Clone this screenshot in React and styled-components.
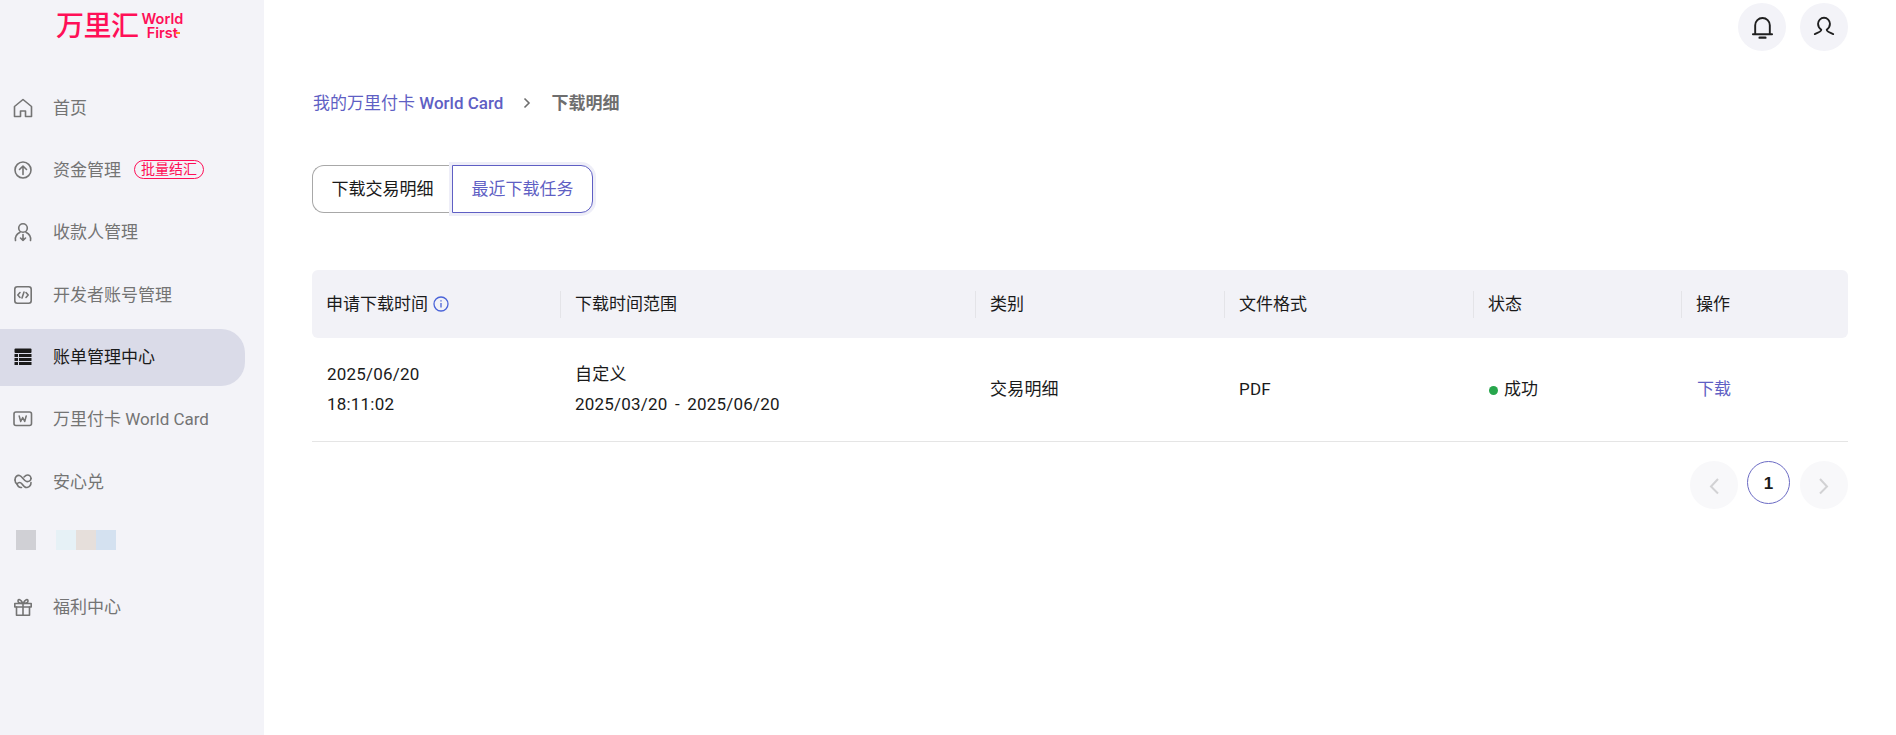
import React from "react";
import styled, { createGlobalStyle } from "styled-components";

const Global = createGlobalStyle`
  html, body { margin: 0; padding: 0; background: #fff; }
  body { font-family: Roboto, "Noto Sans CJK SC", sans-serif; font-size: 17px; color: #1a1a1a; }
  * { box-sizing: border-box; }
`;

const Page = styled.div`
  display: flex;
  width: 1896px;
  height: 735px;
  overflow: hidden;
`;
const Sidebar = styled.aside`
  width: 264px;
  flex: none;
  background: #f3f3f8;
  display: flex;
  flex-direction: column;
`;
const Logo = styled.div`
  height: 79px;
  padding: 11px 0 0 56px;
  display: flex;
  align-items: flex-start;
  gap: 3px;
  color: #ff0f57;
`;
const LogoCn = styled.div`
  font-size: 28px;
  line-height: 32px;
  font-weight: 500;
  letter-spacing: -0.5px;
`;
const LogoEn = styled.div`
  position: relative;
  font-family: Inter, sans-serif;
  font-weight: 600;
  font-size: 14.5px;
  line-height: 14px;
  padding-top: 1px;
  text-align: center;
`;
const LogoMark = styled.span`
  position: absolute;
  right: 3px;
  bottom: 6px;
  width: 4px;
  height: 2px;
  background: #ff8a1f;
`;
const Nav = styled.nav`
  display: flex;
  flex-direction: column;
  gap: 5.4px;
`;
const NavItem = styled.div`
  height: 57px;
  width: 245px;
  display: flex;
  align-items: center;
  padding-left: 13px;
  border-radius: 0 24px 24px 0;
  background: ${(p) => (p.$active ? "#dadbe8" : "transparent")};
  color: ${(p) => (p.$active ? "#1a1a1a" : "#747474")};
  font-size: 17px;
  svg { flex: none; }
`;
const NavLabel = styled.span`
  margin-left: 20px;
  line-height: 20px;
`;
const Badge = styled.span`
  margin-left: 13px;
  height: 19px;
  width: 70px;
  flex: none;
  border: 1px solid #ff0f57;
  border-radius: 10px;
  color: #ff0f57;
  font-size: 14px;
  line-height: 17px;
  text-align: center;
  white-space: nowrap;
`;
const Blur = styled.span`
  width: 20px;
  height: 20px;
  flex: none;
  background: ${(p) => p.$c};
`;
const BlurRow = styled.div`
  height: 57px;
  display: flex;
  align-items: flex-start;
  padding: 14px 0 0 16px;
`;
const BlurGap = styled.span`
  width: 20px;
`;
const Main = styled.main`
  flex: 1;
  padding: 3px 48px 0;
  display: flex;
  flex-direction: column;
`;
const TopBar = styled.div`
  display: flex;
  justify-content: flex-end;
  gap: 14px;
`;
const RoundBtn = styled.div`
  width: 48px;
  height: 48px;
  border-radius: 50%;
  background: #f3f3f8;
  display: flex;
  align-items: center;
  justify-content: center;
`;
const Crumbs = styled.div`
  margin-top: 38px;
  display: flex;
  align-items: center;
  height: 24px;
  font-size: 17px;
  padding-left: 1px;
`;
const CrumbLink = styled.span`
  color: #5f5fc4;
  b { font-weight: 500; }
`;
const CrumbSep = styled.span`
  width: 48px;
  display: flex;
  justify-content: center;
  padding-top: 3px;
`;
const CrumbCurrent = styled.span`
  color: #6e6e6e;
  font-weight: 700;
`;
const Tabs = styled.div`
  margin-top: 52px;
  display: flex;
  width: 281px;
  height: 48px;
`;
const Tab = styled.div`
  height: 48px;
  padding-bottom: 3px;
  display: flex;
  align-items: center;
  justify-content: center;
  font-size: 17px;
  background: #fff;
  ${(p) =>
    p.$active
      ? `width: 141px; color: #5f5fc4; border: 1px solid #5f5fc4; border-radius: 0 12px 12px 0; box-shadow: 0 0 0 3px #eeeef8;`
      : `width: 140px; color: #1a1a1a; border: 1px solid #a8a8a8; border-right: 0; border-radius: 12px 0 0 12px;`}
`;
const Grid = "249px 415px 249px 249px 208px 166px";
const Head = styled.div`
  margin-top: 57px;
  height: 68px;
  display: grid;
  grid-template-columns: ${Grid};
  align-items: center;
  background: #f2f2f7;
  border-radius: 6px;
`;
const HeadCell = styled.div`
  height: 27px;
  padding-left: 14px;
  display: flex;
  align-items: center;
  gap: 5px;
  font-size: 17px;
  line-height: 25px;
  border-right: ${(p) => (p.$last ? "0" : "1px solid #e4e4e8")};
  svg { flex: none; }
`;
const Row = styled.div`
  height: 104px;
  padding-bottom: 1px;
  display: grid;
  grid-template-columns: ${Grid};
  align-items: center;
  border-bottom: 1px solid #e5e5e5;
`;
const Cell = styled.div`
  padding-left: ${(p) => (p.$first ? "15px" : "14px")};
  font-size: 17px;
  line-height: 30px;
  letter-spacing: 0.2px;
  word-spacing: 3px;
  display: flex;
  flex-direction: column;
`;
const Status = styled.div`
  padding-left: 15px;
  display: flex;
  align-items: center;
  gap: 6px;
  font-size: 17px;
  line-height: 30px;
`;
const Dot = styled.span`
  width: 9px;
  height: 9px;
  border-radius: 50%;
  background: #27a64c;
  margin-top: 2px;
`;
const LinkCell = styled.div`
  padding-left: 15px;
  color: #5f5fc4;
  font-size: 17px;
  line-height: 30px;
`;
const Pager = styled.div`
  margin-top: 19px;
  display: flex;
  justify-content: flex-end;
  align-items: flex-start;
  gap: 9px;
`;
const PageArrow = styled.div`
  width: 48px;
  height: 48px;
  padding-top: 2px;
  border-radius: 50%;
  background: #f8f8fa;
  display: flex;
  align-items: center;
  justify-content: center;
`;
const PageNum = styled.div`
  width: 43px;
  height: 43px;
  margin-right: 1px;
  padding-top: 3px;
  border-radius: 50%;
  border: 1px solid #6b6bc4;
  font-family: "Liberation Sans", sans-serif;
  font-weight: 700;
  font-size: 17px;
  display: flex;
  align-items: center;
  justify-content: center;
`;

const I = ({ children, size = 20, color = "#747474", w = 1.6 }) => (
  <svg width={size} height={size} viewBox="0 0 20 20" fill="none" stroke={color} strokeWidth={w} strokeLinecap="round" strokeLinejoin="round">
    {children}
  </svg>
);

const items = [
  { label: "首页", icon: <I><path d="M1.500 8.500 10 1.500l8.500 7V18.500h-6v-5.500h-5v5.500h-6z" /></I> },
  {
    label: "资金管理",
    badge: "批量结汇",
    icon: <I><circle cx="10" cy="10" r="8" /><path d="M10 14.500V6M6.500 9.500 10 6l3.500 3.500" /></I>,
  },
  {
    label: "收款人管理",
    icon: <I><circle cx="10" cy="6" r="4.300" /><path d="M2.500 18.500c-1-5 2-7 4.500-8.300M17.500 18.500c1-5-2-7-4.500-8.300M10 12.500v6M7.500 16l2.500 2.500 2.500-2.500" /></I>,
  },
  {
    label: "开发者账号管理",
    icon: <I><rect x="1.800" y="1.800" width="16.400" height="16.400" rx="2.500" /><path d="M7 7.500 4.800 10 7 12.500M13 7.500l2.200 2.500-2.200 2.500M11 7l-2 6" /></I>,
  },
  {
    label: "账单管理中心",
    active: true,
    icon: (
      <svg width="20" height="20" viewBox="0 0 20 20" fill="#1a1a1a">
        <rect x="1.500" y="1.500" width="17" height="4.500" rx="1" />
        <rect x="1.500" y="7" width="3.500" height="3" />
        <rect x="6" y="7" width="12.500" height="3" />
        <rect x="1.500" y="11" width="3.500" height="3" />
        <rect x="6" y="11" width="12.500" height="3" />
        <rect x="1.500" y="15" width="3.500" height="3" />
        <rect x="6" y="15" width="12.500" height="3" />
      </svg>
    ),
  },
  {
    label: "万里付卡 World Card",
    icon: (
      <svg width="20" height="20" viewBox="0 0 20 20" fill="none" stroke="#747474" strokeLinecap="round" strokeLinejoin="round">
        <rect x="1" y="3" width="17.500" height="13.500" rx="2" strokeWidth="1.600" />
        <path d="M6.200 7 7.700 12.500 9.700 8.500l2 4L13.200 7" strokeWidth="1.500" />
      </svg>
    ),
  },
  {
    label: "安心兑",
    icon: (
      <I>
        <path d="M2 8c0-3 2-5 4.500-4.500C9 4 11 9 13.500 9.500 16 10 18 8.500 18 6.500" />
        <path d="M18 6.500c0-2-1.500-3.500-3.500-3.500-1.500 0-2.500 1-3.500 2" />
        <path d="M2 8c0 2 .8 3.300 2 4 1.500-2 3.500-2 5 0 1.500 2 3 4 5 3.500 2.500-.5 4-2.500 4-5" />
        <path d="M4 12c.8 2.500 2.500 3.800 4.500 3.500" />
      </I>
    ),
  },
  { blur: true },
  {
    label: "福利中心",
    icon: <I><rect x="1.800" y="6.500" width="16.400" height="3.500" /><path d="M3.500 10v8.300h13V10M10 6.500v11.800M10 6.500C8 2.500 5 1.500 5 4c0 2 3 2.500 5 2.500zM10 6.500c2-4 5-5 5-2.500 0 2-3 2.500-5 2.500z" /></I>,
  },
];

export default function App() {
  return (
    <Page>
      <Global />
      <Sidebar>
        <Logo>
          <LogoCn>万里汇</LogoCn>
          <LogoEn>
            World
            <br />
            First
            <LogoMark />
          </LogoEn>
        </Logo>
        <Nav>
          {items.map((it, i) =>
            it.blur ? (
              <BlurRow key={i}>
                <Blur $c="#d0d0d5" />
                <BlurGap />
                <Blur $c="#e6f1f6" />
                <Blur $c="#e6dfdb" />
                <Blur $c="#d4e1f0" />
              </BlurRow>
            ) : (
              <NavItem key={i} $active={it.active}>
                {it.icon}
                <NavLabel>{it.label}</NavLabel>
                {it.badge && <Badge>{it.badge}</Badge>}
              </NavItem>
            )
          )}
        </Nav>
      </Sidebar>
      <Main>
        <TopBar>
          <RoundBtn>
            <svg width="27" height="27" viewBox="0 0 24 24" fill="none" stroke="#1f1f1f" strokeWidth="1.700" strokeLinecap="round" strokeLinejoin="round">
              <path d="M5.500 18V10a6.500 6.500 0 0 1 13 0v8M3.500 18h17" />
              <path d="M9.500 21h5" strokeWidth="2.200" />
            </svg>
          </RoundBtn>
          <RoundBtn>
            <svg width="26" height="26" viewBox="0 0 24 24" fill="none" stroke="#1f1f1f" strokeWidth="1.700" strokeLinecap="round" strokeLinejoin="round">
              <path d="M9.500 14.500C7.500 13 6.500 11 6.500 9a5.500 5.500 0 0 1 11 0c0 2-1 4-3 5.500 0 1 3 2.800 6 4M9.500 14.500c0 1-3 2.800-6 4" />
            </svg>
          </RoundBtn>
        </TopBar>
        <Crumbs>
          <CrumbLink>
            我的万里付卡 <b>World Card</b>
          </CrumbLink>
          <CrumbSep>
            <svg width="12" height="12" viewBox="0 0 12 12" fill="none" stroke="#6e6e6e" strokeWidth="1.600">
              <path d="M3.500 1.500 8 6l-4.500 4.500" />
            </svg>
          </CrumbSep>
          <CrumbCurrent>下载明细</CrumbCurrent>
        </Crumbs>
        <Tabs>
          <Tab>下载交易明细</Tab>
          <Tab $active>最近下载任务</Tab>
        </Tabs>
        <Head>
          <HeadCell>
            申请下载时间
            <svg width="16" height="16" viewBox="0 0 16 16" fill="none" stroke="#4a63d8" strokeWidth="1.300">
              <circle cx="8" cy="8" r="7" />
              <path d="M8 7v4.500M8 4.200v1.200" />
            </svg>
          </HeadCell>
          <HeadCell>下载时间范围</HeadCell>
          <HeadCell>类别</HeadCell>
          <HeadCell>文件格式</HeadCell>
          <HeadCell>状态</HeadCell>
          <HeadCell $last>操作</HeadCell>
        </Head>
        <Row>
          <Cell $first>
            <span>2025/06/20</span>
            <span>18:11:02</span>
          </Cell>
          <Cell>
            <span>自定义</span>
            <span>2025/03/20 - 2025/06/20</span>
          </Cell>
          <Cell>交易明细</Cell>
          <Cell>PDF</Cell>
          <Status>
            <Dot />
            成功
          </Status>
          <LinkCell>下载</LinkCell>
        </Row>
        <Pager>
          <PageArrow>
            <svg width="16" height="20" viewBox="0 0 16 20" fill="none" stroke="#d2d2d4" strokeWidth="2">
              <path d="M12 3 5 10.500l7 7" />
            </svg>
          </PageArrow>
          <PageNum>1</PageNum>
          <PageArrow>
            <svg width="16" height="20" viewBox="0 0 16 20" fill="none" stroke="#d2d2d4" strokeWidth="2">
              <path d="M4 3l7 7.500-7 7" />
            </svg>
          </PageArrow>
        </Pager>
      </Main>
    </Page>
  );
}
